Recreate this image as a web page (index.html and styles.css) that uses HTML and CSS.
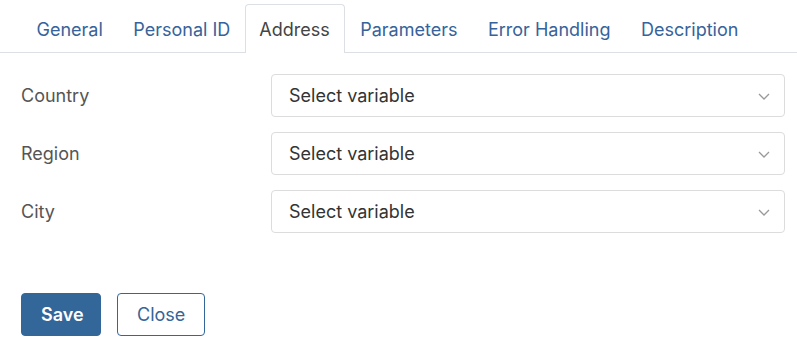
FILE: index.html
```html
<!DOCTYPE html>
<html lang="en">
<head>
    <meta charset="UTF-8">
    <meta name="viewport" content="width=device-width, initial-scale=1.0">
    <title>Address</title>
    <link rel="stylesheet" href="styles.css">
</head>
<body>
    <div class="tabs">
        <div class="tab">General</div>
        <div class="tab">Personal ID</div>
        <div class="tab active">Address</div>
        <div class="tab">Parameters</div>
        <div class="tab">Error Handling</div>
        <div class="tab">Description</div>
    </div>

    <div class="form">
        <div class="row">
            <label>Country</label>
            <div class="select">
                <span>Select variable</span>
                <svg class="chevron" width="12" height="7" viewBox="0 0 12 7"><path d="M1 1l5 5 5-5" fill="none" stroke="#999" stroke-width="1.3"/></svg>
            </div>
        </div>
        <div class="row">
            <label>Region</label>
            <div class="select">
                <span>Select variable</span>
                <svg class="chevron" width="12" height="7" viewBox="0 0 12 7"><path d="M1 1l5 5 5-5" fill="none" stroke="#999" stroke-width="1.3"/></svg>
            </div>
        </div>
        <div class="row">
            <label>City</label>
            <div class="select">
                <span>Select variable</span>
                <svg class="chevron" width="12" height="7" viewBox="0 0 12 7"><path d="M1 1l5 5 5-5" fill="none" stroke="#999" stroke-width="1.3"/></svg>
            </div>
        </div>
    </div>

    <div class="actions">
        <button class="btn primary">Save</button>
        <button class="btn">Close</button>
    </div>
</body>
</html>
```

FILE: styles.css
```css
* {
    margin: 0;
    padding: 0;
    box-sizing: border-box;
    font-family: Inter, "Liberation Sans", Arial, sans-serif;
}

body {
    background-color: #fff;
    width: 797px;
}

.tabs {
    display: flex;
    padding: 4px 0 0 21px;
    border-bottom: 1px solid #dcdfe4;
    height: 53px;
}

.tab {
    height: 49px;
    padding: 0 14px 0 14.5px;
    font-size: 18px;
    line-height: 49px;
    color: #36639b;
    border: 1px solid transparent;
    border-bottom: none;
}

.tab.active {
    color: #444;
    background-color: #fff;
    border-color: #dcdfe4;
    border-radius: 4px 4px 0 0;
    padding: 0 14px 0 13px;
}

.form {
    display: flex;
    flex-direction: column;
    gap: 15px;
    padding: 21px 12px 0 21px;
}

.row {
    display: flex;
    align-items: center;
}

.row label {
    width: 250px;
    font-size: 18px;
    color: #555;
}

.select {
    flex: 1;
    height: 43px;
    display: flex;
    align-items: center;
    justify-content: space-between;
    padding: 0 14px 0 17px;
    border: 1px solid #dcdcdc;
    border-radius: 4px;
    font-size: 18px;
    color: #333;
}

.chevron {
    margin-top: 1px;
}

.actions {
    display: flex;
    gap: 16px;
    padding: 60px 0 0 21px;
}

.btn {
    height: 43px;
    padding: 0 19px;
    font-size: 18px;
    border: 1px solid #336699;
    border-radius: 4px;
    background-color: #fff;
    color: #336699;
}

.btn.primary {
    width: 80px;
    background-color: #336699;
    color: #fff;
    font-weight: 600;
}
```
